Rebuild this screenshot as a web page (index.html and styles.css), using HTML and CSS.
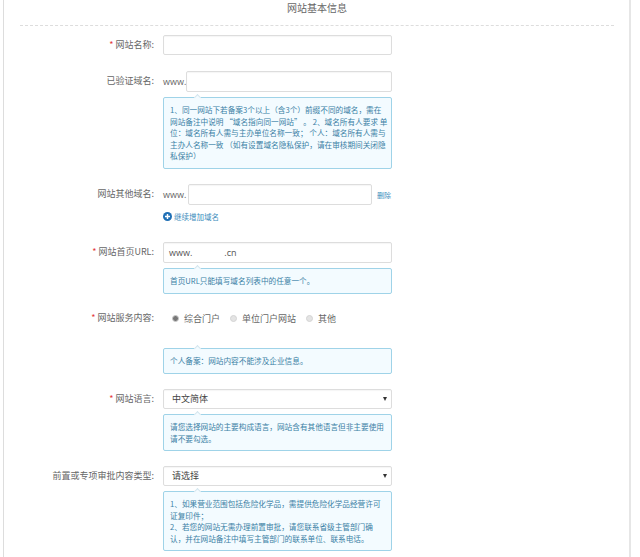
FILE: index.html
```html
<!DOCTYPE html>
<html lang="zh-CN">
<head>
    <meta charset="UTF-8">
    <title>网站基本信息</title>
    <link rel="stylesheet" href="styles.css">
</head>
<body>
    <div class="panel">
        <h2 class="title">网站基本信息</h2>

        <div class="row row-name">
            <label class="label"><span class="req">*</span> 网站名称:</label>
            <div class="field"><input type="text" class="input"></div>
        </div>

        <div class="row row-domain">
            <label class="label">已验证域名:</label>
            <div class="field">
                <div class="www-line">
                    <span class="www">www.</span>
                    <input type="text" class="input">
                </div>
                <div class="tip">1、同一网站下若备案3个以上（含3个）前缀不同的域名，需在<br>网站备注中说明 “域名指向同一网站” 。 2、域名所有人要求 单<br>位：域名所有人需与主办单位名称一致； 个人：域名所有人需与<br>主办人名称一致 （如有设置域名隐私保护，请在审核期间关闭隐<br>私保护）</div>
            </div>
        </div>

        <div class="row row-other">
            <label class="label">网站其他域名:</label>
            <div class="field">
                <div class="www-line other-line">
                    <span class="www">www.</span>
                    <input type="text" class="input">
                    <a class="remove">删除</a>
                </div>
                <a class="add-domain">
                    <svg class="add-icon" viewBox="0 0 10 10"><circle cx="5" cy="5" r="5" fill="#1f6fb5"/><path d="M5 2.2v5.6M2.2 5h5.6" stroke="#fff" stroke-width="1.6"/></svg>
                    继续增加域名
                </a>
            </div>
        </div>

        <div class="row row-url">
            <label class="label"><span class="req">*</span> 网站首页URL:</label>
            <div class="field">
                <div class="input url-value">www.<span class="url-gap"></span>.cn</div>
                <div class="tip">首页URL只能填写域名列表中的任意一个。</div>
            </div>
        </div>

        <div class="row row-service">
            <label class="label"><span class="req">*</span> 网站服务内容:</label>
            <div class="field">
                <div class="radios">
                    <span class="radio on"></span><span class="radio-text">综合门户</span>
                    <span class="radio"></span><span class="radio-text">单位门户网站</span>
                    <span class="radio"></span><span class="radio-text">其他</span>
                </div>
                <div class="tip">个人备案：网站内容不能涉及企业信息。</div>
            </div>
        </div>

        <div class="row row-lang">
            <label class="label"><span class="req">*</span> 网站语言:</label>
            <div class="field">
                <div class="input select">中文简体<span class="caret"></span></div>
                <div class="tip">请您选择网站的主要构成语言，网站含有其他语言但非主要使用<br>请不要勾选。</div>
            </div>
        </div>

        <div class="row">
            <label class="label">前置或专项审批内容类型:</label>
            <div class="field">
                <div class="input select">请选择<span class="caret"></span></div>
                <div class="tip">1、如果营业范围包括危险化学品，需提供危险化学品经营许可<br>证复印件；<br>2、若您的网站无需办理前置审批，请您联系省级主管部门确<br>认，并在网站备注中填写主管部门的联系单位、联系电话。</div>
            </div>
        </div>
    </div>
</body>
</html>
```

FILE: styles.css
```css
html, body {
    height: 557px;
    overflow: hidden;
}

body {
    margin: 0;
    background: #fff;
    font-family: "Noto Sans CJK SC", "Open Sans", sans-serif;
    font-size: 9px;
    color: #666;
}

.panel {
    box-sizing: border-box;
    width: 628px;
    height: 557px;
    margin-left: 3px;
    padding: 0 15px 0 16px;
    border-left: 1px solid #ddd;
    border-right: 2px solid #e6e6e6;
}

.title {
    margin: 0;
    height: 25px;
    line-height: 15px;
    font-size: 10px;
    font-weight: normal;
    text-align: center;
    color: #666;
    border-bottom: 1px dashed #ddd;
}

.row {
    display: flex;
}

.row-name {
    margin-top: 9px;
    margin-bottom: 16px;
}

.row-domain {
    margin-bottom: 15.5px;
}

.row-other {
    margin-bottom: 21px;
}

.row-url {
    margin-bottom: 14.5px;
}

.row-service {
    margin-bottom: 15.5px;
}

.row-lang {
    margin-bottom: 15px;
}

.label {
    width: 134px;
    height: 20px;
    line-height: 20px;
    text-align: right;
    white-space: nowrap;
    margin-right: 9px;
    flex-shrink: 0;
}

.req {
    color: #e4393c;
}

.field {
    width: 229px;
    flex-shrink: 0;
}

.input {
    display: block;
    box-sizing: border-box;
    width: 100%;
    height: 20px;
    padding: 0 8px;
    line-height: 18px;
    background: #fff;
    border: 1px solid #ddd;
    border-radius: 2px;
    box-shadow: inset 0 1px 1px rgba(0, 0, 0, 0.04);
    color: #555;
    font-size: 9px;
    font-family: inherit;
}

.www-line {
    display: flex;
    align-items: center;
}

.www-line .input {
    flex: 1;
    width: auto;
    height: 21px;
    min-width: 0;
}

.www {
    font-family: "Open Sans", sans-serif;
}

.other-line .www {
    width: 25px;
    flex-shrink: 0;
}

.other-line .input {
    flex: none;
    width: 184px;
}

.remove {
    margin-left: 5px;
    font-size: 7px;
    white-space: nowrap;
    color: #3c8dbc;
}

.add-domain {
    display: flex;
    align-items: center;
    margin-top: 6px;
    height: 10px;
    font-size: 7.5px;
    color: #3c8dbc;
}

.add-icon {
    width: 9px;
    height: 9px;
    margin-right: 2px;
}

.url-value {
    padding-left: 5px;
    font-family: "Open Sans", sans-serif;
    height: 21px;
    line-height: 19px;
}

.url-gap {
    display: inline-block;
    width: 32px;
}

.tip {
    position: relative;
    box-sizing: border-box;
    margin-top: 5px;
    padding: 6px 4px 6px 6px;
    line-height: 11.5px;
    font-size: 7.65px;
    white-space: nowrap;
    color: #3a7fa5;
    background: #f3fbff;
    border: 1px solid #9fd3e8;
    border-radius: 2px;
}

.tip::before {
    content: "";
    position: absolute;
    top: -3px;
    left: 31px;
    width: 4px;
    height: 4px;
    background: #f3fbff;
    border-top: 1px solid #d5e6ee;
    border-left: 1px solid #d5e6ee;
    transform: rotate(45deg);
}

.radios {
    display: flex;
    align-items: center;
    height: 20px;
    padding-left: 9px;
    margin-bottom: 20px;
}

.radio {
    box-sizing: border-box;
    width: 7px;
    height: 7px;
    border-radius: 50%;
    background: #e4e4e4;
    border: 1px solid #d4d4d4;
    margin-right: 5px;
}

.radio.on {
    background: #777;
    border: 1px solid #ccc;
}

.radio-text {
    margin-right: 10px;
}

.select {
    position: relative;
    color: #444;
}

.caret {
    position: absolute;
    right: 4px;
    top: 7px;
    width: 0;
    height: 0;
    border-left: 2px solid transparent;
    border-right: 2px solid transparent;
    border-top: 4px solid #333;
}
```
